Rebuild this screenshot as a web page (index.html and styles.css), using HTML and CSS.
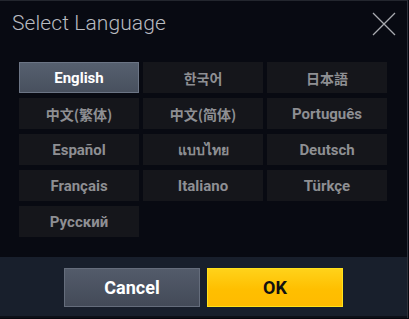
FILE: index.html
```html
<!DOCTYPE html>
<html lang="en">
<head>
    <meta charset="UTF-8">
    <link rel="stylesheet" href="styles.css">
</head>
<body>
    <div class="dialog">
        <div class="head">
            <span class="title">Select Language</span>
            <svg class="close" width="24" height="24" viewBox="0 0 24 24">
                <path d="M1 1L23 23M23 1L1 23" stroke="#a9abb0" stroke-width="1.3" fill="none"/>
            </svg>
        </div>

        <div class="langs">
            <a href="#" class="lang active">English</a>
            <a href="#" class="lang cjk">한국어</a>
            <a href="#" class="lang cjk">日本語</a>
            <a href="#" class="lang cjk">中文(繁体)</a>
            <a href="#" class="lang cjk">中文(简体)</a>
            <a href="#" class="lang">Português</a>
            <a href="#" class="lang">Español</a>
            <a href="#" class="lang thai">แบบไทย</a>
            <a href="#" class="lang">Deutsch</a>
            <a href="#" class="lang">Français</a>
            <a href="#" class="lang">Italiano</a>
            <a href="#" class="lang">Türkçe</a>
            <a href="#" class="lang">Русский</a>
        </div>

        <div class="foot">
            <a href="#" class="btn cancel">Cancel</a>
            <a href="#" class="btn ok">OK</a>
        </div>
    </div>
</body>
</html>
```

FILE: styles.css
```css
*{
    padding: 0;
    margin: 0;
    box-sizing: border-box;
}

body{
    background-color: #07080f;
    width: 409px;
    height: 319px;
    overflow: hidden;
    font-family: Roboto, "Noto Sans", "Noto Sans CJK KR", sans-serif;
}

.dialog{
    width: 408px;
    height: 318px;
    background-color: #080a12;
    border-top: 1px solid #23262e;
    border-right: 1px solid #2e323c;
    display: flex;
    flex-direction: column;
}

.head{
    height: 60px;
    display: flex;
    justify-content: space-between;
    align-items: flex-start;
    padding: 0 11px 0 12px;
}

.title{
    font-weight: 300;
    font-size: 21px;
    color: #b9bbc0;
    margin-top: 10px;
    letter-spacing: 0.1px;
}

.close{
    margin-top: 11px;
}

.langs{
    display: grid;
    grid-template-columns: repeat(3, 120px);
    grid-auto-rows: 31px;
    column-gap: 4px;
    row-gap: 5px;
    padding-left: 19px;
    margin-top: 1px;
}

.lang{
    display: flex;
    justify-content: center;
    align-items: center;
    background-color: #15161b;
    color: #8e8f93;
    font-weight: bold;
    font-size: 15px;
    text-decoration: none;
}

.cjk{
    font-family: "Noto Sans CJK SC", "Noto Sans CJK KR", sans-serif;
    font-size: 14px;
}

.thai{
    font-size: 14px;
}

.active{
    background: linear-gradient(#56606f, #48505e);
    border: 1px solid #6c7585;
    color: #ffffff;
}

.foot{
    margin-top: auto;
    height: 61px;
    background-color: #181f2c;
    display: flex;
    justify-content: center;
    gap: 7px;
    padding-top: 11px;
    border-bottom: 2px solid #0d1018;
}

.btn{
    width: 136px;
    height: 39px;
    display: flex;
    justify-content: center;
    align-items: center;
    font-weight: bold;
    font-size: 18px;
    text-decoration: none;
}

.cancel{
    background: linear-gradient(#535b6a, #434a58);
    border: 1px solid #656d7c;
    color: #ffffff;
}

.ok{
    background: linear-gradient(#ffd21a, #ffbf00 55%, #ffbb00);
    border: 1px solid #ffe21a;
    color: #111111;
}
```
